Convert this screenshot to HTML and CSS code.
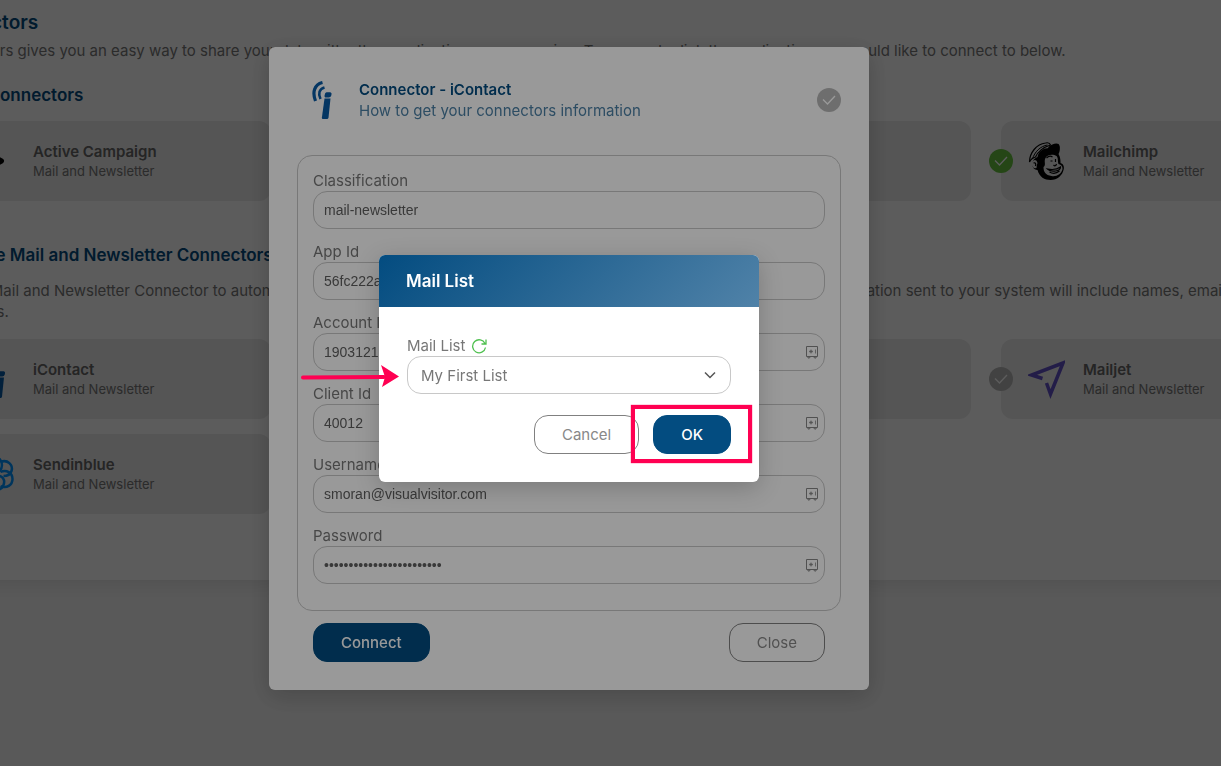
FILE: index.html
```html
<!DOCTYPE html>
<html lang="en">
<head>
  <meta charset="UTF-8">
  <meta name="viewport" content="width=device-width, initial-scale=1.0">
  <title>Connectors</title>
  <link rel="stylesheet" href="styles.css">
</head>
<body>
  <svg width="0" height="0" class="sprite" aria-hidden="true">
    <symbol id="check" viewBox="0 0 24 24">
      <path d="M6 11.500l4.500 4.500 7.500-8" fill="none" stroke="currentColor" stroke-width="1.300"/>
    </symbol>
    <symbol id="icontact" viewBox="0 0 20 39">
      <path d="M10.500 1.500C2.500 3.500 0 11 3.500 20" fill="none" stroke="currentColor" stroke-width="3.200"/>
      <path d="M12.500 6.500C7 8 6 13 8.500 18" fill="none" stroke="currentColor" stroke-width="2.600"/>
      <path d="M14.500 11.300h3.500a1.500 1.500 0 0 1 1.500 2l-.3 1.400a2.500 2.500 0 0 1-2.400 1.800h-2.700a1.500 1.500 0 0 1-1.500-2l.3-1.200a2 2 0 0 1 1.600-2z" fill="currentColor"/>
      <path d="M12.500 17.500h6l-2 19q-.2 1.500-1.500 1.500h-4q-1.300 0-1.100-1.500z" fill="currentColor"/>
    </symbol>
    <symbol id="safe" viewBox="0 0 14 14">
      <path d="M1.500 1.500h11v10h-11zM3 11.500v1.500h1.500l.8-1.500M11 11.500v1.500H9.500l-.8-1.500" fill="none" stroke="currentColor"/>
      <path d="M4 6.500h4M6 4.500v4M5 5.200l2 2.600M7 5.200L5 7.800M10.500 4.500v4" fill="none" stroke="currentColor" stroke-width=".8"/>
    </symbol>
  </svg>

  <main class="page">
    <h1>Connectors</h1>
    <p>Connectors gives you an easy way to share your data with other applications you are using. To connect, click the application you would like to connect to below.</p>

    <h2>Active Connectors</h2>
    <div class="cards">
      <div class="card">
        <svg class="logo" viewBox="0 0 36 40"><path d="M3 8l20 12L3 32" fill="none" stroke="#000" stroke-width="5" stroke-linejoin="round"/></svg>
        <div><h3>Active Campaign</h3><small>Mail and Newsletter</small></div>
      </div>
      <div class="card"></div>
      <div class="card"></div>
      <div class="card">
        <svg class="status on"><use href="#check"/></svg>
        <svg class="logo" viewBox="0 0 36 40">
          <path d="M9 16c1-6 6-9 12-9l8-3c4 0 2 8 1 9 2 3 2 7 2 9 3 1 4 4 3 7-1 5-6 10-13 10-6 0-11-3-13-10-4 0-6-4-5-8 1-3 3-4 5-5z" fill="#000"/>
          <path d="M1 21C1 12 8 3 17 2q4-1 5 2C15 6 9 11 7 16q-4 1-6 5z" fill="#ebebeb" stroke="#000" stroke-width="1.200"/>
          <path d="M4 18C6 11 12 5 19 4" fill="none" stroke="#000"/>
          <path d="M20 6c4-4 11-5 11-1 0 3-2 6-3 8-3-2-8-2-11 0z" fill="#000"/>
          <path d="M17 17c2-4 8-4 11-2 2 2 1 5 2 8 3 1 4 2 4 5-1 5-6 8-11 7-6-1-8-4-8-9 3-2 0-6 2-9z" fill="#ebebeb"/>
          <path d="M4 20q4-3 5 2-1 2-1 5-4 1-5-4z" fill="#ebebeb"/>
          <path d="M5 22q3-1 2 3M18 17q3-3 6-1M22 20h2M27 18v3M25 24q2 2 3-1M19 28c5 1 9 1 13-2 0 4-9 6-13 2zM21 31q5 3 10-1" fill="none" stroke="#000" stroke-width="1.200"/>
        </svg>
        <div><h3>Mailchimp</h3><small>Mail and Newsletter</small></div>
      </div>
    </div>

    <h2>Available Mail and Newsletter Connectors</h2>
    <p>Use the Mail and Newsletter Connector to automatically send your visitor information to your email system on every visit. The information sent to your system will include names, email<br>addresses.</p>
    <div class="cards">
      <div class="card">
        <svg class="logo icontact" viewBox="0 0 36 40"><use href="#icontact" x="7" y="1" width="20" height="39"/></svg>
        <div><h3>iContact</h3><small>Mail and Newsletter</small></div>
      </div>
      <div class="card"></div>
      <div class="card"></div>
      <div class="card">
        <svg class="status"><use href="#check"/></svg>
        <svg class="logo" viewBox="0 0 36 40">
          <path d="M14 19.500L3 16 34.500 4 22 35l-4-11" fill="none" stroke="#6351c8" stroke-width="3.500"/>
        </svg>
        <div><h3>Mailjet</h3><small>Mail and Newsletter</small></div>
      </div>
      <div class="card">
        <svg class="logo" viewBox="0 0 36 40">
          <g fill="none" stroke="#0092ff" stroke-width="2.500">
            <circle cx="15" cy="11" r="8.500"/>
            <path d="M22 8c7-3 13 3 11 9-1 3-4 5-8 5"/>
            <path d="M22 18c6-3 12 1 12 7s-6 10-12 7"/>
            <path d="M18 22c6-1 9 4 7 9s-8 7-13 3"/>
          </g>
        </svg>
        <div><h3>Sendinblue</h3><small>Mail and Newsletter</small></div>
      </div>
    </div>
  </main>

  <div class="overlay">
    <section class="modal connector" role="dialog" aria-labelledby="connector-title">
      <header class="connector-head">
        <svg class="connector-logo icontact"><use href="#icontact"/></svg>
        <div class="connector-title">
          <h3 id="connector-title">Connector - iContact</h3>
          <a href="#">How to get your connectors information</a>
        </div>
        <svg class="badge"><use href="#check"/></svg>
      </header>
      <form class="fields">
        <label for="classification">Classification</label>
        <div class="field"><input type="text" id="classification" value="mail-newsletter"></div>
        <label for="app-id">App Id</label>
        <div class="field"><input type="text" id="app-id" value="56fc222a"></div>
        <label for="account-id">Account Id</label>
        <div class="field"><input type="text" id="account-id" value="1903121"><svg><use href="#safe"/></svg></div>
        <label for="client-id">Client Id</label>
        <div class="field"><input type="text" id="client-id" value="40012"><svg><use href="#safe"/></svg></div>
        <label for="username">Username</label>
        <div class="field"><input type="text" id="username" value="smoran@visualvisitor.com"><svg><use href="#safe"/></svg></div>
        <label for="password">Password</label>
        <div class="field"><input type="password" id="password" value="123456789012345678901234"><svg><use href="#safe"/></svg></div>
      </form>
      <footer class="connector-foot">
        <button class="btn primary">Connect</button>
        <button class="btn">Close</button>
      </footer>
    </section>
  </div>

  <div class="overlay">
    <section class="modal mail-list" role="dialog" aria-labelledby="list-title">
      <h2 class="mail-list-head" id="list-title">Mail List</h2>
      <div class="mail-list-body">
        <div class="list-label">
          <label for="list">Mail List</label>
          <svg class="refresh" viewBox="0 0 16 16"><path d="M14 5.500A6.500 6.500 0 1 0 14.500 9.500M15 1.500v4.500h-4.500" fill="none" stroke="#4fc04f" stroke-width="1.300"/></svg>
        </div>
        <div class="field">
          <select id="list"><option>My First List</option></select>
          <svg class="chevron" viewBox="0 0 12 12"><path d="M1 3.500l5 5 5-5" fill="none" stroke="#555" stroke-width="1.500"/></svg>
          <svg class="arrow" viewBox="0 0 100 24"><path d="M3 13.500L84 13" stroke="#ff0052" stroke-width="4" stroke-linecap="round"/><path d="M81 1l18 11.500L82 23l3-10z" fill="#ff0052"/></svg>
        </div>
        <div class="list-buttons">
          <button class="btn">Cancel</button>
          <div class="marked"><button class="btn primary">OK</button></div>
        </div>
      </div>
    </section>
  </div>
</body>
</html>
```

FILE: styles.css
```css
* {
  box-sizing: border-box;
}
body {
  margin: 0;
  min-height: 100vh;
  overflow: hidden;
  background: #f7f7f7;
  font: 15px/21px Inter, sans-serif;
  color: #777;
}
h1, h2, h3, p {
  margin: 0;
}
h1, h2 {
  color: #034c80;
  font-weight: 600;
}
.sprite {
  display: block;
}

/* page, scrolled a little to the right */
.page {
  width: 1480px;
  margin-left: -99px;
  padding: 12px 30px 66px;
  background: #fff;
  box-shadow: 0 4px 20px rgba(0,0,0,0.1);
}
h1 {
  font-size: 19px;
  line-height: 21px;
  margin-bottom: 7px;
}
h2 {
  font-size: 17px;
  line-height: 21px;
}
.page p {
  white-space: nowrap;
}
.page h2 {
  margin: 24px 0 15px;
}
.cards {
  display: grid;
  grid-template-columns: repeat(4, 320px);
  gap: 15px 30px;
  padding-left: 20px;
}
.page .cards + h2 {
  margin: 44px 0 14px;
}
p + .cards {
  margin-top: 17px;
}
.card {
  position: relative;
  display: flex;
  align-items: center;
  gap: 18px;
  height: 80px;
  padding-left: 27px;
  border-radius: 12px;
  background: #ebebeb;
}
.card h3 {
  font-size: 15px;
  line-height: 20px;
  font-weight: 600;
  color: #666;
}
.card small {
  display: block;
  font-size: 13px;
  line-height: 18px;
}
.logo {
  width: 37px;
  height: 40px;
}
.icontact {
  color: #085aa5;
}
.status, .badge {
  width: 24px;
  height: 24px;
  border-radius: 50%;
  background: #b8b8b8;
  color: #fff;
}
.status {
  position: absolute;
  left: -12px;
  top: 28px;
}
.status.on {
  background: #66c23f;
}

.overlay {
  position: fixed;
  inset: 0;
  display: flex;
  align-items: center;
  justify-content: center;
  padding: 0 83px 29px 0;
  background: rgba(0,0,0,0.4);
}
.modal {
  border-radius: 6px;
  background: #fff;
  box-shadow: 0 6px 24px rgba(0,0,0,0.2);
}
.connector {
  width: 600px;
  padding: 28px;
}
.connector-head {
  display: flex;
  align-items: center;
  height: 50px;
  margin-bottom: 30px;
}
.connector-logo {
  width: 20px;
  height: 39px;
  margin: 0 27px 0 15px;
}
.connector-title {
  flex: 1;
}
.connector-title h3 {
  font-size: 15px;
  line-height: 21px;
  font-weight: 600;
  color: #034c80;
}
.connector-title a {
  display: block;
  color: #4c80a6;
  text-decoration: none;
}
.fields {
  padding: 14px 15px 26px;
  border: 1px solid #c8c8c8;
  border-radius: 15px;
}
label {
  display: block;
  line-height: 21px;
}
.field {
  position: relative;
}
.fields .field + label {
  margin-top: 12px;
}
.field input, .field select {
  display: block;
  width: 100%;
  height: 38px;
  padding: 0 10px;
  border: 1px solid #c8c8c8;
  border-radius: 14px;
  background: transparent;
  font: 14px "Liberation Sans", Arial, sans-serif;
  color: #606060;
}
.field select {
  appearance: none;
  padding: 0 13px;
  font: 15px Inter, sans-serif;
  color: #777;
}
.fields svg {
  position: absolute;
  right: 6px;
  top: 12px;
  width: 14px;
  height: 14px;
  color: #888;
}
.connector-foot {
  display: flex;
  justify-content: space-between;
  padding: 12px 16px 0;
}
.btn {
  height: 39px;
  padding: 0 27px;
  border: 1px solid #808080;
  border-radius: 14px;
  background: #fff;
  font: 15px Inter, sans-serif;
  color: #888;
}
.btn.primary {
  border-color: #034c80;
  background: #034c80;
  color: #fff;
  font-weight: 500;
}

.mail-list {
  width: 380px;
}
.mail-list-head {
  padding: 0 27px;
  border-radius: 6px 6px 0 0;
  background: linear-gradient(135deg, #034c80, #5082a8);
  line-height: 52px;
  color: #fff;
}
.mail-list-body {
  padding: 28px;
}
.list-label {
  display: flex;
  align-items: center;
  gap: 6px;
}
.refresh {
  width: 16px;
  height: 16px;
}
.chevron {
  position: absolute;
  right: 15px;
  top: 13px;
  width: 12px;
  height: 12px;
}
.arrow {
  position: absolute;
  left: -107px;
  top: 8px;
  width: 100px;
  height: 24px;
}
.list-buttons {
  display: flex;
  justify-content: flex-end;
  gap: 14px;
  margin-top: 21px;
}
.marked {
  position: relative;
}
/* frame drawn round the OK button */
.marked::after {
  content: "";
  position: absolute;
  inset: -10px -21px -9px -22px;
  border: 4px solid #ff0052;
  box-shadow: 0 0 1px #ff0052;
  pointer-events: none;
}
```
